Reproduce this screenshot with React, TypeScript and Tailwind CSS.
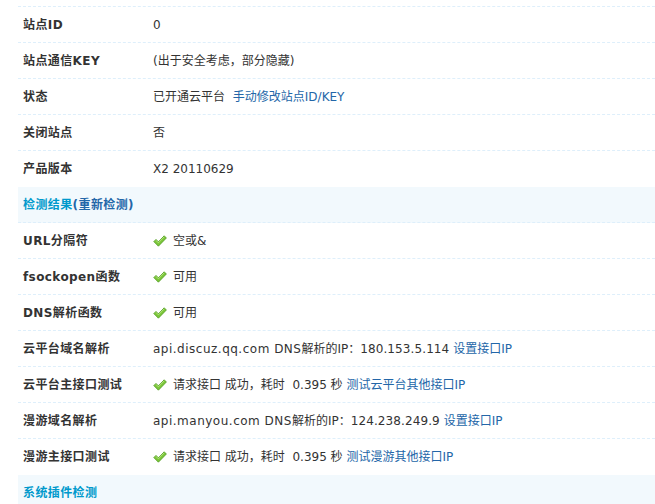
import React from "react";

const Check = () => (
  <svg width="14" height="12" viewBox="0 0 14 12" className="mr-[6px] shrink-0">
    <path
      d="M0.8 6.6 L3 4.4 L5.4 6.8 L11.2 0.8 L13.4 3 L5.4 11.2 Z"
      fill="#7cc63a"
      stroke="#4f9a22"
      strokeWidth="0.8"
      strokeLinejoin="round"
    />
    <path d="M3 5.4 L5.4 7.8 L11.2 1.8" fill="none" stroke="#b5e67e" strokeWidth="0.9" />
  </svg>
);

type Row = { label: string; value: React.ReactNode; noBorder?: boolean };

const Link = ({ children }: { children: React.ReactNode }) => (
  <span className="text-[#2366a8]">{children}</span>
);

const rows1: Row[] = [
  { label: "站点ID", value: "0" },
  { label: "站点通信KEY", value: "(出于安全考虑，部分隐藏)" },
  {
    label: "状态",
    value: (
      <>
        已开通云平台 <span className="ml-[4px]"><Link>手动修改站点ID/KEY</Link></span>
      </>
    ),
  },
  { label: "关闭站点", value: "否" },
  { label: "产品版本", value: "X2 20110629", noBorder: true },
];

const rows2: Row[] = [
  { label: "URL分隔符", value: (<><Check />空或&amp;</>) },
  { label: "fsockopen函数", value: (<><Check />可用</>) },
  { label: "DNS解析函数", value: (<><Check />可用</>) },
  {
    label: "云平台域名解析",
    value: (
      <>
        <span className="tracking-[0.5px]">api.discuz.qq.com DNS</span>解析的IP：
        <span className="tracking-[0.1px]">180.153.5.114</span>&nbsp;<Link>设置接口IP</Link>
      </>
    ),
  },
  {
    label: "云平台主接口测试",
    value: (
      <>
        <Check />请求接口 成功，耗时&nbsp; 0.395 秒&nbsp;<Link>测试云平台其他接口IP</Link>
      </>
    ),
  },
  {
    label: "漫游域名解析",
    value: (
      <>
        <span className="tracking-[0.5px]">api.manyou.com DNS</span>解析的IP：
        <span className="tracking-[0.1px]">124.238.249.9</span>&nbsp;<Link>设置接口IP</Link>
      </>
    ),
  },
  {
    label: "漫游主接口测试",
    value: (
      <>
        <Check />请求接口 成功，耗时&nbsp; 0.395 秒&nbsp;<Link>测试漫游其他接口IP</Link>
      </>
    ),
    noBorder: true,
  },
];

const RowView = ({ r }: { r: Row }) => (
  <div
    className={
      "flex h-[36px] items-center " +
      (r.noBorder ? "" : "border-b border-dashed border-[#deeffb]")
    }
  >
    <div className="w-[130px] shrink-0 pl-[5px] font-bold tracking-[0.4px] text-[#333]">{r.label}</div>
    <div className="flex items-center pl-[5px] text-[#333] whitespace-pre">{r.value}</div>
  </div>
);

const Header = ({ children }: { children: React.ReactNode }) => (
  <div className="flex h-[36px] items-center border-b border-dashed border-[#deeffb] bg-[#f2f9fd] pl-[5px] font-bold tracking-[0.4px] text-[#0099cc]">
    {children}
  </div>
);

export default function App() {
  return (
    <div
      className="h-[504px] w-[655px] overflow-hidden bg-white pl-[18px] text-[12px] leading-[18px]"
      style={{ fontFamily: '"DejaVu Sans", "Noto Sans CJK SC", sans-serif' }}
    >
      <div className="h-[7px] border-b border-dashed border-[#deeffb]" />
      {rows1.map((r) => (
        <RowView key={r.label} r={r} />
      ))}
      <Header>
        检测结果<span className="text-[#2366a8]">(重新检测)</span>
      </Header>
      {rows2.map((r) => (
        <RowView key={r.label} r={r} />
      ))}
      <Header>系统插件检测</Header>
    </div>
  );
}
